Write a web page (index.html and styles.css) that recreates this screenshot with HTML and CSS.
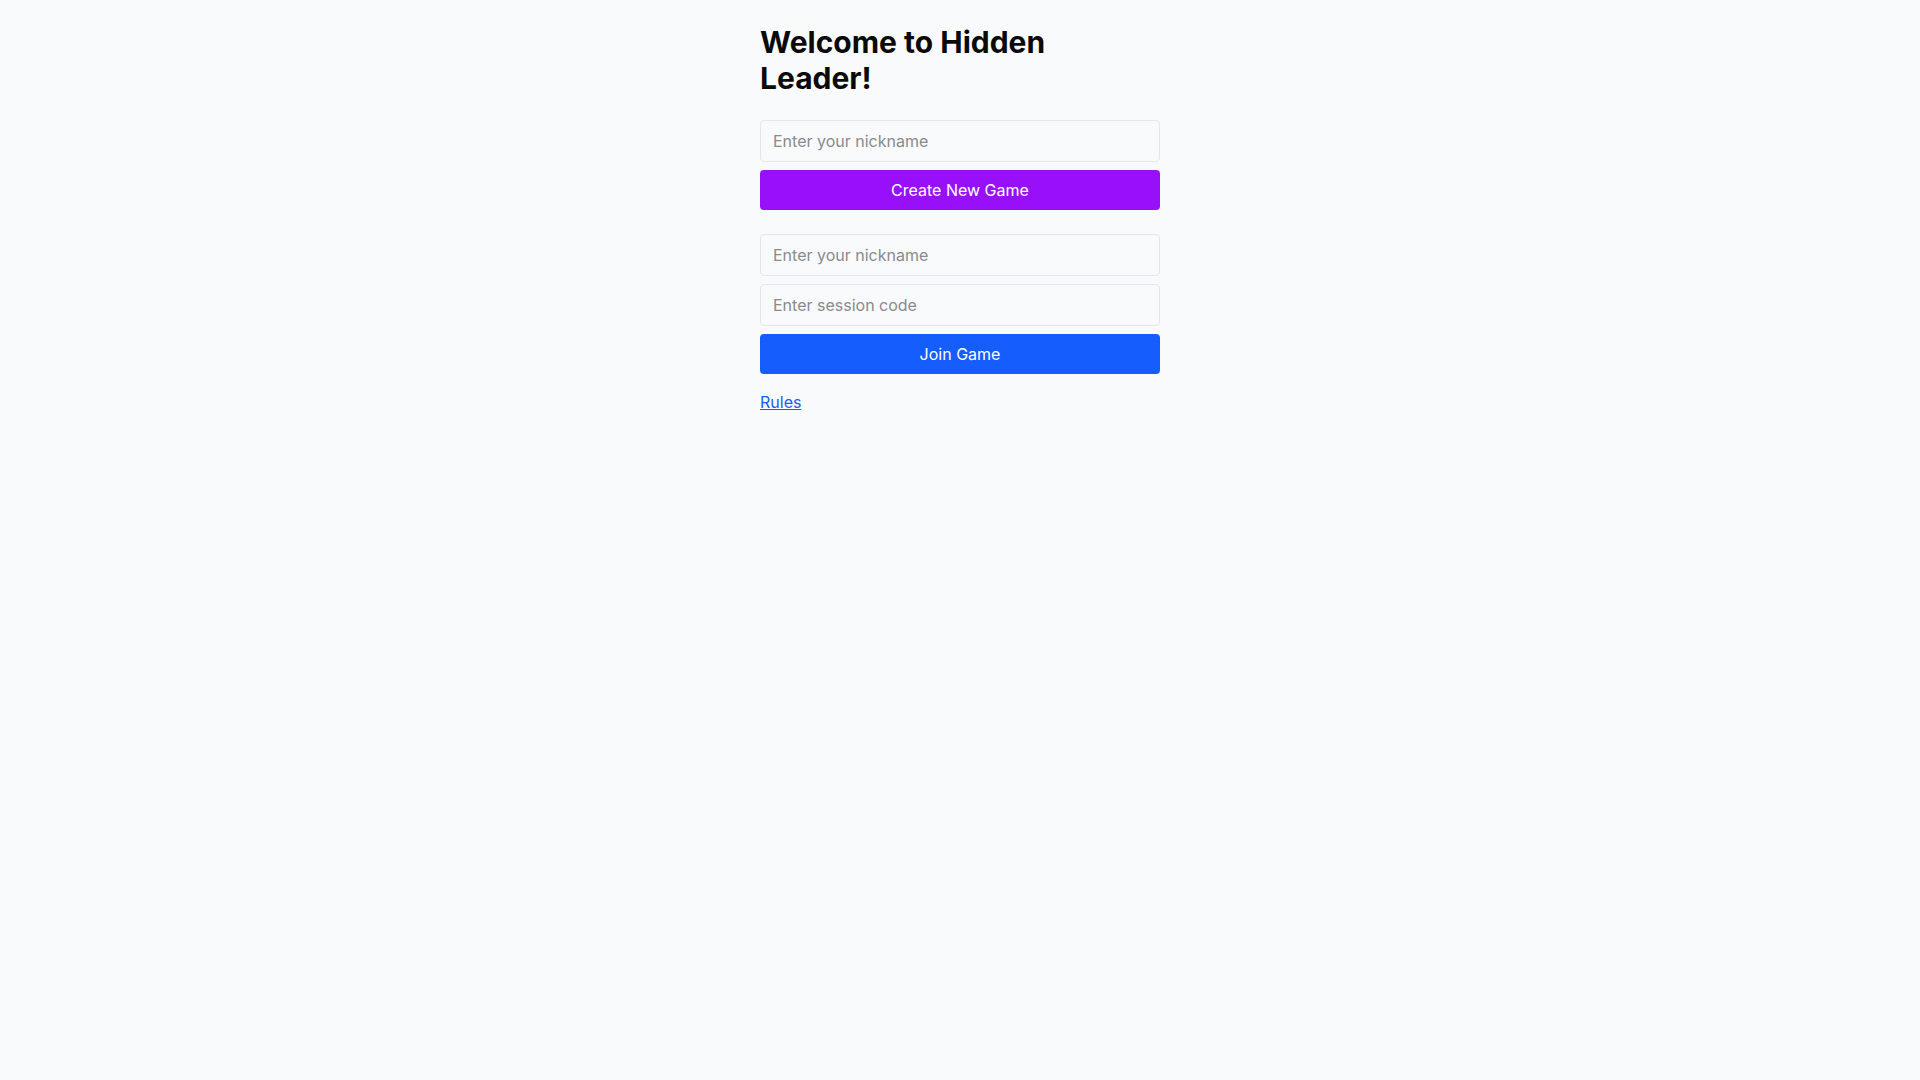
FILE: index.html
```html
<!DOCTYPE html>
<html lang="en">
<head>
<meta charset="utf-8">
<title>Hidden Leader</title>
<link rel="stylesheet" href="styles.css">
</head>
<body>
<main class="container">
  <h1 class="title">Welcome to Hidden Leader!</h1>
  <section class="group">
    <input class="field" type="text" placeholder="Enter your nickname">
    <button class="btn btn-create">Create New Game</button>
  </section>
  <section class="group">
    <input class="field" type="text" placeholder="Enter your nickname">
    <input class="field" type="text" placeholder="Enter session code">
    <button class="btn btn-join">Join Game</button>
  </section>
  <a class="rules" href="#">Rules</a>
</main>
</body>
</html>
```
FILE: styles.css
```css
* { box-sizing: border-box; }
html, body {
  margin: 0;
  padding: 0;
  background: #f9fafb;
  font-family: Inter, "Noto Sans", sans-serif;
  color: #0a0a0a;
}
.container {
  width: 400px;
  margin: 0 auto;
  padding-top: 24px;
  display: flex;
  flex-direction: column;
  align-items: flex-start;
}
.title {
  margin: 0 0 24px;
  font-size: 30px;
  line-height: 36px;
  font-weight: 700;
  width: 100%;
}
.group {
  width: 100%;
  display: flex;
  flex-direction: column;
  gap: 8px;
  margin-bottom: 24px;
}
.group + .group { margin-bottom: 16px; }
.field {
  width: 100%;
  height: 42px;
  padding: 10px 12px;
  border: 1px solid #e5e7eb;
  border-radius: 4px;
  background: #f9fafb;
  font-family: inherit;
  font-size: 16px;
  line-height: 20px;
  color: #0a0a0a;
  outline: none;
}
.field::placeholder { color: #8a8a8f; }
.btn {
  width: 100%;
  height: 40px;
  border: none;
  border-radius: 4px;
  color: #ffffff;
  font-family: inherit;
  font-size: 16px;
  font-weight: 400;
  line-height: 20px;
  cursor: pointer;
}
.btn-create { background: #9810fa; }
.btn-join { background: #155dfc; }
.rules {
  font-size: 16px;
  line-height: 24px;
  color: #155dfc;
  text-decoration: underline;
}
```
